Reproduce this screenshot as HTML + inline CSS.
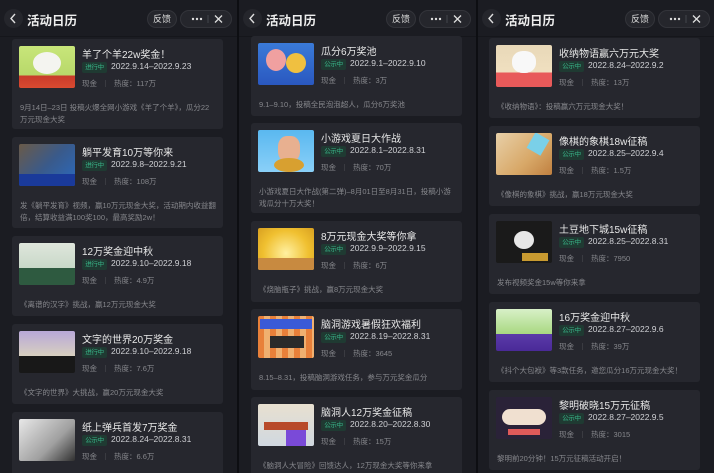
<!DOCTYPE html>
<html><head><meta charset="utf-8"><style>
*{margin:0;padding:0;box-sizing:border-box}
body{width:714px;height:473px;overflow:hidden;background:#0d0e12;font-family:"Liberation Sans","Noto Sans CJK SC",sans-serif;position:relative}
.p{position:absolute;top:0;height:473px;width:237px;background:#1b1c22;overflow:hidden}
.hd{position:absolute;left:0;top:0;width:100%;height:37px;border-bottom:1px solid #15161b}
.bk{position:absolute;left:4px;top:9px;width:19px;height:19px;border-radius:50%;background:#25262c}
.bk svg,.mo svg{position:absolute;left:0;top:0}
.tt{position:absolute;left:27px;top:10px;font-size:12.5px;font-weight:bold;color:#eee}
.fb{position:absolute;left:147px;top:10px;width:30px;height:18px;border-radius:9px;background:#25262c;border:1px solid #33343a;color:#ddd;font-size:9px;text-align:center;line-height:16px}
.mo{position:absolute;left:180px;top:10px;width:52px;height:18px;border-radius:9px;background:#25262c;border:1px solid #33343a}
.c{position:absolute;width:211px;background:#26272e;border-radius:3px}
.im{position:absolute;left:7px;top:7px;width:56px;height:42px;border-radius:2px;overflow:hidden}
.ti{position:absolute;left:70px;top:7px;font-size:10px;color:#e8e8e8;white-space:nowrap}
.bd{position:absolute;left:70px;top:23px;width:25px;height:11px;overflow:hidden;text-align:center;font-size:6.5px;line-height:11px;color:#38b387;background:#1f3a32;border-radius:2px;white-space:nowrap;letter-spacing:-0.3px}
.dt{position:absolute;left:99px;top:22px;font-size:8.5px;color:#cfd0d4;white-space:nowrap}
.in{position:absolute;left:70px;top:39px;font-size:7.5px;color:#86878c;white-space:nowrap}
.in i{display:inline-block;width:1px;height:7px;background:#3a3b41;margin:0 8px;vertical-align:-1px}
.ds{position:absolute;left:8px;top:63px;width:196px;font-size:7.5px;line-height:12px;color:#86878c}
</style></head><body>

<div class="p" style="left:0">
<div class="hd"><div class="bk"><svg width="19" height="19"><polyline points="11,5 7,9.5 11,14" fill="none" stroke="#ddd" stroke-width="1.4"/></svg></div><div class="tt">活动日历</div><div class="fb">反馈</div><div class="mo"><svg width="50" height="16"><circle cx="12" cy="8" r="1.2" fill="#ddd"/><circle cx="16" cy="8" r="1.2" fill="#ddd"/><circle cx="20" cy="8" r="1.2" fill="#ddd"/><line x1="27" y1="4" x2="27" y2="12" stroke="#44454b"/><path d="M34 4.5l7 7M41 4.5l-7 7" stroke="#ddd" stroke-width="1.3"/></svg></div></div>
<div class="c" style="left:12px;top:39px;height:90px"><div class="im" style="background:linear-gradient(#c8e67a,#b8d86a 70%,#c83a2a 70%,#d84a30)"><div style="position:absolute;left:14px;top:6px;width:28px;height:22px;border-radius:50%;background:#f4f4f0"></div></div><div class="ti">羊了个羊22w奖金！</div><div class="bd">进行中</div><div class="dt">2022.9.14–2022.9.23</div><div class="in">现金<i></i>热度：117万</div><div class="ds">9月14日–23日 投稿火爆全网小游戏《羊了个羊》，瓜分22万元现金大奖</div></div>
<div class="c" style="left:12px;top:137px;height:91px"><div class="im" style="background:linear-gradient(135deg,#6a5a48,#3a5a8a 50%,#2a6ac0);"><div style="position:absolute;left:0;bottom:0;width:56px;height:12px;background:#1a3a9a"></div></div><div class="ti">躺平发育10万等你来</div><div class="bd">进行中</div><div class="dt">2022.9.8–2022.9.21</div><div class="in">现金<i></i>热度：108万</div><div class="ds">发《躺平发育》视频，赢10万元现金大奖，活动期内收益翻倍，结算收益满100奖100，最高奖励2w！</div></div>
<div class="c" style="left:12px;top:236px;height:80px"><div class="im" style="background:linear-gradient(#dfe6dc,#c8d8c8 60%,#2e5a40 60%,#2e5a40)"></div><div class="ti">12万奖金迎中秋</div><div class="bd">进行中</div><div class="dt">2022.9.10–2022.9.18</div><div class="in">现金<i></i>热度：4.9万</div><div class="ds">《离谱的汉字》挑战，赢12万元现金大奖</div></div>
<div class="c" style="left:12px;top:324px;height:80px"><div class="im" style="background:linear-gradient(#b8a8d8,#d8d0c0 60%,#181818 60%)"></div><div class="ti">文字的世界20万奖金</div><div class="bd">进行中</div><div class="dt">2022.9.10–2022.9.18</div><div class="in">现金<i></i>热度：7.6万</div><div class="ds">《文字的世界》大挑战，赢20万元现金大奖</div></div>
<div class="c" style="left:12px;top:412px;height:70px"><div class="im" style="background:linear-gradient(135deg,#e8e8e8,#a0a0a0 60%,#303030)"></div><div class="ti">纸上弹兵首发7万奖金</div><div class="bd">公示中</div><div class="dt">2022.8.24–2022.8.31</div><div class="in">现金<i></i>热度：6.6万</div></div>
</div>

<div class="p" style="left:239px">
<div class="hd"><div class="bk"><svg width="19" height="19"><polyline points="11,5 7,9.5 11,14" fill="none" stroke="#ddd" stroke-width="1.4"/></svg></div><div class="tt">活动日历</div><div class="fb">反馈</div><div class="mo"><svg width="50" height="16"><circle cx="12" cy="8" r="1.2" fill="#ddd"/><circle cx="16" cy="8" r="1.2" fill="#ddd"/><circle cx="20" cy="8" r="1.2" fill="#ddd"/><line x1="27" y1="4" x2="27" y2="12" stroke="#44454b"/><path d="M34 4.5l7 7M41 4.5l-7 7" stroke="#ddd" stroke-width="1.3"/></svg></div></div>
<div class="c" style="left:12px;top:36px;height:80px"><div class="im" style="background:linear-gradient(#3a7ad8,#2a58c0)"><div style="position:absolute;left:8px;top:6px;width:20px;height:22px;border-radius:50%;background:#f0a0a0"></div><div style="position:absolute;left:28px;top:10px;width:20px;height:20px;border-radius:50%;background:#f0c040"></div></div><div class="ti">瓜分6万奖池</div><div class="bd">公示中</div><div class="dt">2022.9.1–2022.9.10</div><div class="in">现金<i></i>热度：3万</div><div class="ds">9.1–9.10，投稿全民泡泡超人，瓜分6万奖池</div></div>
<div class="c" style="left:12px;top:123px;height:90px"><div class="im" style="background:linear-gradient(#5ab8f0,#8ad0f8)"><div style="position:absolute;left:20px;top:6px;width:22px;height:26px;border-radius:40%;background:#e8b090"></div><div style="position:absolute;left:16px;top:28px;width:30px;height:14px;background:#d8a030;border-radius:50%"></div></div><div class="ti">小游戏夏日大作战</div><div class="bd">公示中</div><div class="dt">2022.8.1–2022.8.31</div><div class="in">现金<i></i>热度：70万</div><div class="ds">小游戏夏日大作战(第二弹)–8月01日至8月31日，投稿小游戏瓜分十万大奖！</div></div>
<div class="c" style="left:12px;top:221px;height:81px"><div class="im" style="background:radial-gradient(circle at 50% 60%,#fff0a0,#f0c030 60%,#d8a020)"><div style="position:absolute;left:0;bottom:0;width:56px;height:12px;background:#c88a40"></div></div><div class="ti">8万元现金大奖等你拿</div><div class="bd">公示中</div><div class="dt">2022.9.9–2022.9.15</div><div class="in">现金<i></i>热度：6万</div><div class="ds">《烧脑瓶子》挑战，赢8万元现金大奖</div></div>
<div class="c" style="left:12px;top:309px;height:81px"><div class="im" style="background:repeating-linear-gradient(90deg,#e8803a 0 6px,#f0b070 6px 12px)"><div style="position:absolute;left:2px;top:3px;width:52px;height:10px;background:#3a5ad8"></div><div style="position:absolute;left:12px;top:20px;width:34px;height:12px;background:#2a2a2a"></div></div><div class="ti">脑洞游戏暑假狂欢福利</div><div class="bd">公示中</div><div class="dt">2022.8.19–2022.8.31</div><div class="in">现金<i></i>热度：3645</div><div class="ds">8.15–8.31，投稿脑洞游戏任务，参与万元奖金瓜分</div></div>
<div class="c" style="left:12px;top:397px;height:80px"><div class="im" style="background:linear-gradient(#e8e0d0,#d0d8e0)"><div style="position:absolute;left:6px;top:18px;width:44px;height:8px;background:#b84a2a"></div><div style="position:absolute;left:28px;top:26px;width:20px;height:16px;background:#7a4ad8"></div></div><div class="ti">脑洞人12万奖金征稿</div><div class="bd">公示中</div><div class="dt">2022.8.20–2022.8.30</div><div class="in">现金<i></i>热度：15万</div><div class="ds">《脑洞人大冒险》回馈达人，12万现金大奖等你来拿</div></div>
</div>

<div class="p" style="left:478px;width:236px">
<div class="hd"><div class="bk"><svg width="19" height="19"><polyline points="11,5 7,9.5 11,14" fill="none" stroke="#ddd" stroke-width="1.4"/></svg></div><div class="tt">活动日历</div><div class="fb">反馈</div><div class="mo"><svg width="50" height="16"><circle cx="12" cy="8" r="1.2" fill="#ddd"/><circle cx="16" cy="8" r="1.2" fill="#ddd"/><circle cx="20" cy="8" r="1.2" fill="#ddd"/><line x1="27" y1="4" x2="27" y2="12" stroke="#44454b"/><path d="M34 4.5l7 7M41 4.5l-7 7" stroke="#ddd" stroke-width="1.3"/></svg></div></div>
<div class="c" style="left:11px;top:38px;height:80px"><div class="im" style="background:linear-gradient(#e8d8b8,#f0e0c0 65%,#e85a5a 65%)"><div style="position:absolute;left:16px;top:6px;width:24px;height:22px;border-radius:45%;background:#f8f8f8"></div></div><div class="ti">收纳物语赢六万元大奖</div><div class="bd">公示中</div><div class="dt">2022.8.24–2022.9.2</div><div class="in">现金<i></i>热度：13万</div><div class="ds">《收纳物语》：投稿赢六万元现金大奖！</div></div>
<div class="c" style="left:11px;top:126px;height:80px"><div class="im" style="background:linear-gradient(135deg,#e8d0a8,#d8a868 60%,#c08040)"><div style="position:absolute;left:34px;top:2px;width:16px;height:18px;background:#7ad0e8;transform:rotate(30deg)"></div></div><div class="ti">像棋的象棋18w征稿</div><div class="bd">公示中</div><div class="dt">2022.8.25–2022.9.4</div><div class="in">现金<i></i>热度：1.5万</div><div class="ds">《像棋的象棋》挑战，赢18万元现金大奖</div></div>
<div class="c" style="left:11px;top:214px;height:80px"><div class="im" style="background:#1a1a1a"><div style="position:absolute;left:18px;top:10px;width:20px;height:18px;border-radius:50%;background:#e8e8e8"></div><div style="position:absolute;left:26px;top:32px;width:26px;height:8px;background:#c89a30"></div></div><div class="ti">土豆地下城15w征稿</div><div class="bd">公示中</div><div class="dt">2022.8.25–2022.8.31</div><div class="in">现金<i></i>热度：7950</div><div class="ds">发布视频奖金15w等你来拿</div></div>
<div class="c" style="left:11px;top:302px;height:80px"><div class="im" style="background:linear-gradient(#d8f0c8,#a8d880 60%,#5a3aa8 60%,#4a2a98)"></div><div class="ti">16万奖金迎中秋</div><div class="bd">公示中</div><div class="dt">2022.8.27–2022.9.6</div><div class="in">现金<i></i>热度：39万</div><div class="ds">《抖个大包袱》等3款任务，邀您瓜分16万元现金大奖！</div></div>
<div class="c" style="left:11px;top:390px;height:80px"><div class="im" style="background:#2a2238"><div style="position:absolute;left:6px;top:12px;width:44px;height:16px;border-radius:8px;background:#f0e0d0"></div><div style="position:absolute;left:12px;top:32px;width:32px;height:6px;background:#e05a5a"></div></div><div class="ti">黎明破晓15万元征稿</div><div class="bd">公示中</div><div class="dt">2022.8.27–2022.9.5</div><div class="in">现金<i></i>热度：3015</div><div class="ds">黎明前20分钟！15万元征稿活动开启！</div></div>
</div>
</body></html>
